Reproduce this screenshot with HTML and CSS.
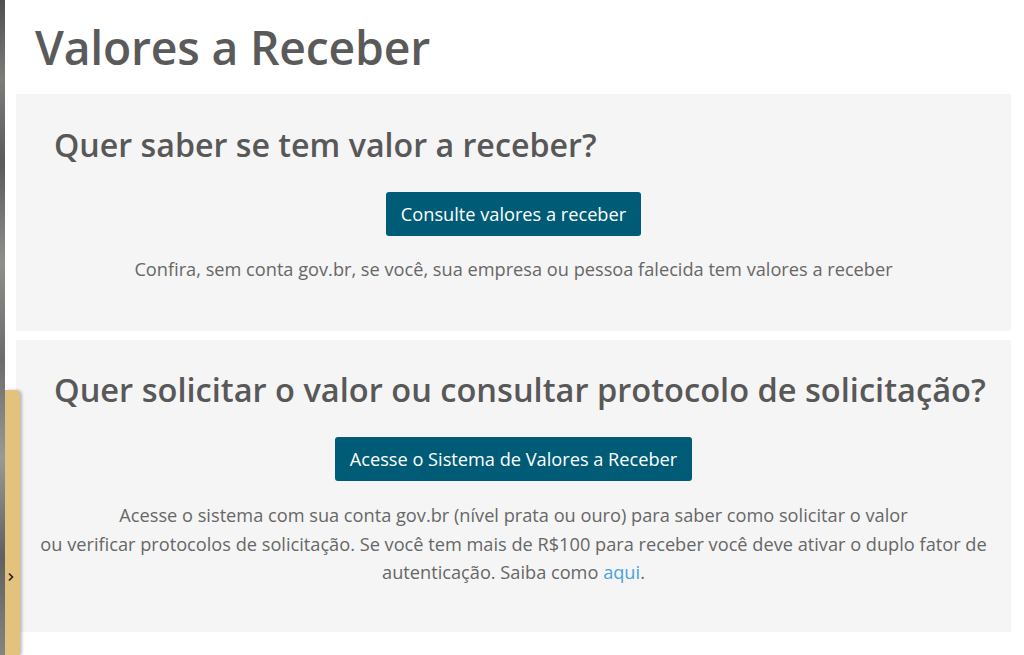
FILE: index.html
```html
<html lang="pt-BR">
<head>
    <meta charset="utf-8">
    <meta name="viewport" content="width=device-width, initial-scale=1">
    <title>Valores a Receber</title>
    <link rel="stylesheet" href="styles.css">
</head>

<body>
<div class="edge"></div>
<main>
    <h1>Valores a Receber</h1>

    <section class="card first">
        <h2>Quer saber se tem valor a receber?</h2>
        <a class="btn" href="#">Consulte valores a receber</a>
        <p>Confira, sem conta gov.br, se você, sua empresa ou pessoa falecida tem valores a receber</p>
    </section>

    <section class="card second">
        <h2>Quer solicitar o valor ou consultar protocolo de solicitação?</h2>
        <a class="btn" href="#">Acesse o Sistema de Valores a Receber</a>
        <p>Acesse o sistema com sua conta gov.br (nível prata ou ouro) para saber como solicitar o valor<br>
            ou verificar protocolos de solicitação. Se você tem mais de R$100 para receber você deve ativar o duplo fator de<br>
            autenticação. Saiba como <a href="#">aqui</a>.</p>
    </section>
</main>

<div class="tab">
    <svg width="8" height="10" viewBox="0 0 8 10"><polyline points="2,1.5 5.5,5 2,8.5" fill="none" stroke="#222" stroke-width="1.6"/></svg>
</div>
</body>
</html>
```

FILE: styles.css
```css
* {
    margin: 0;
    padding: 0;
    box-sizing: border-box;
}

body {
    display: flex;
    min-height: 655px;
    color: #666;
    font: normal 16px "Open Sans", sans-serif;
    background: #fff;
    overflow: hidden;
}

.edge {
    width: 5px;
    flex-shrink: 0;
    background: linear-gradient(180deg, #4e5052 0, #7c7c78 12%, #5a5b5c 25%, #8f8e8a 40%, #6b6c6c 55%, #9a9994 70%, #5f6060 85%, #858480 100%);
}

main {
    width: 995px;
    margin-left: 11px;
}

h1 {
    font-size: 46.3px;
    font-weight: 600;
    letter-spacing: -0.2px;
    color: #5a5a5a;
    line-height: 56px;
    padding: 20px 0 18px 19px;
}

.card {
    background: #f5f5f5;
    display: flex;
    flex-direction: column;
    align-items: center;
    text-align: center;
}

.card h2 {
    align-self: flex-start;
    margin-left: 38px;
    font-weight: 600;
    color: #585858;
    line-height: 40px;
}

.card.first h2 {
    font-size: 32.2px;
}

.card.second h2 {
    font-size: 32.6px;
}

.card.first {
    height: 237px;
    padding-top: 31px;
}

.card.second {
    height: 292px;
    margin-top: 9px;
    padding-top: 30px;
}

.btn {
    display: inline-block;
    margin-top: 27px;
    padding: 0 15px;
    height: 44px;
    line-height: 44px;
    border-radius: 3px;
    background: #005c76;
    color: #fff;
    font-size: 18.2px;
    text-decoration: none;
}

.card p {
    font-size: 18.2px;
    line-height: 28.5px;
    color: #676767;
}

.card.first p {
    margin-top: 19px;
}

.card.second p {
    margin-top: 20px;
}

.card p a {
    color: #4da2da;
    text-decoration: none;
}

.tab {
    position: absolute;
    left: 5px;
    top: 390px;
    width: 15px;
    height: 265px;
    background: #e2c27c;
    border-radius: 0 5px 0 0;
    box-shadow: 2px 0 3px rgba(0, 0, 0, .25);
}

.tab svg {
    position: absolute;
    left: 2px;
    top: 182px;
}
```
